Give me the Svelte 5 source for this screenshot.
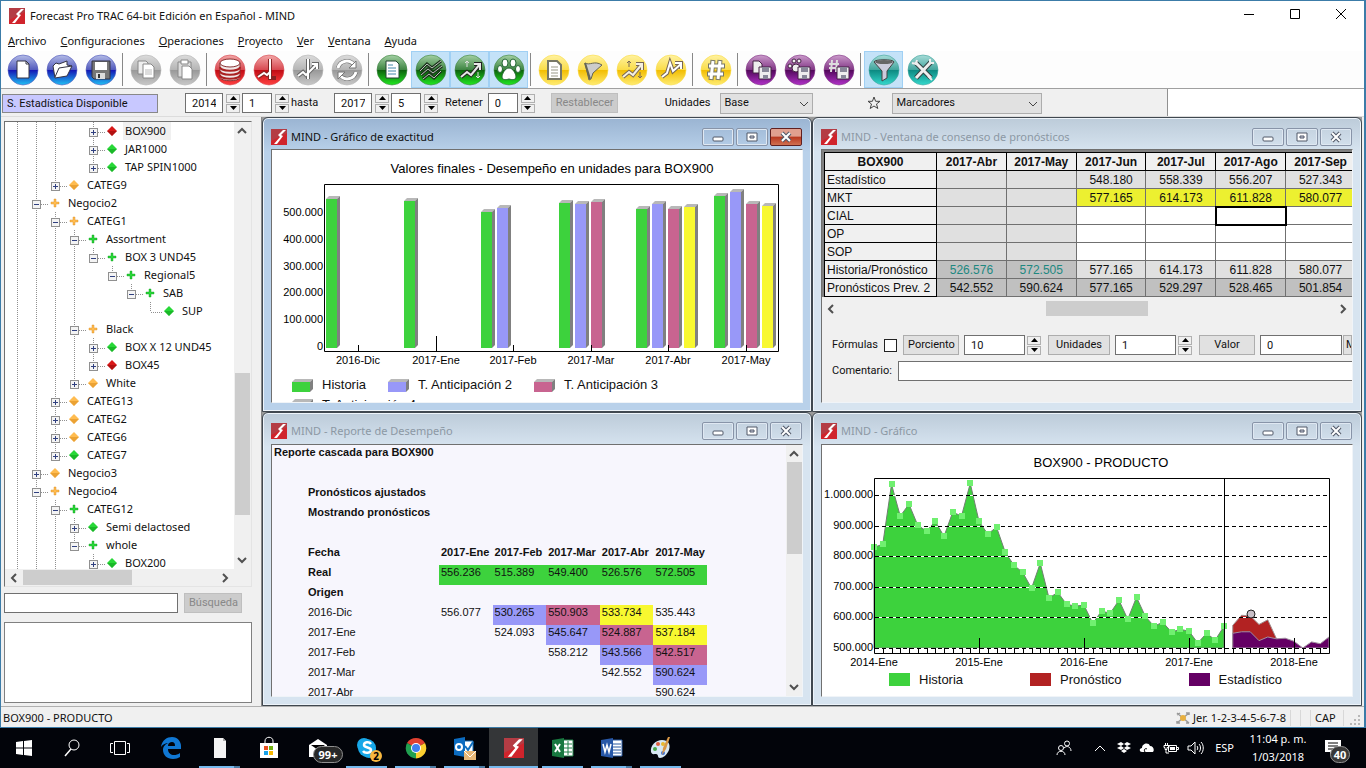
<script lang="ts">
  type TreeRow = { label: string; depth: number; box: '+' | '-' | ''; color: string; selected?: boolean };

  const menus = ['Archivo', 'Configuraciones', 'Operaciones', 'Proyecto', 'Ver', 'Ventana', 'Ayuda'];

  const tones: Record<string, string[]> = {
    blue: ['#b4bce6', '#5058bc', '#1414b4', '#20c0f4'],
    gray: ['#dcdcdc', '#b4b4b4', '#989898', '#c8c8c8'],
    red: ['#f2a8a8', '#d84850', '#c00c14', '#ff4040'],
    green: ['#a4d0a4', '#3c8440', '#0c600c', '#20e820'],
    yellow: ['#fff2a0', '#fadc48', '#f2bc00', '#ffec70'],
    purple: ['#cc9ccc', '#803484', '#500858', '#b030c8'],
    teal: ['#a8dcd8', '#40a49c', '#0c8880', '#34d8cc']
  };

  const trend = 'M7 23l6-5 4 3 9-11M20 10h6v6';
  const glyphs: Record<string, string> = {
    page: '<path d="M10 7h9l3 3v14H10z" fill="#fff" stroke="#334"/><path d="M19 7v3h3" fill="none" stroke="#334"/>',
    folder: '<path d="M7 12l3-3 3 1 8-3v4l5 1-5 10-12 2z" fill="#fff" stroke="#334"/><path d="M9 23l4-9 13-2" fill="none" stroke="#334"/>',
    floppy: '<path d="M7 7h18v18H9l-2-2z" fill="#777" stroke="#334"/><path d="M10 8h12v8H10z" fill="#fff"/><path d="M11 19h9v6h-9z" fill="#ddd"/><path d="M13 20h2v4h-2z" fill="#333"/>',
    copy: '<path d="M8 7h8l2 2v11H8z" fill="#eee" stroke="#888"/><path d="M13 10h8l3 3v11H13z" fill="#fff" stroke="#888"/><path d="M15 16h7M15 18h7M15 20h7" stroke="#bbb"/>',
    paste: '<path d="M9 8h13v15H9z" fill="#ddd" stroke="#888"/><path d="M12 6h7v4h-7z" fill="#fff" stroke="#888"/><path d="M13 12h7l3 3v10H13z" fill="#fff" stroke="#888"/>',
    db: '<path d="M6 9v14c0 5 20 5 20 0V9z" fill="#f0e8e8" stroke="#833"/><ellipse cx="16" cy="9" rx="10" ry="4" fill="#fff" stroke="#833"/><path d="M6 13c0 5 20 5 20 0M6 17c0 5 20 5 20 0M6 21c0 5 20 5 20 0" fill="none" stroke="#a22" stroke-width="2"/>',
    spike: '<path d="M17 5v20M5 23l6-4 3 2 3-3v6h6" fill="none" stroke="#822" stroke-width="4"/><path d="M17 5v20M5 23l6-4 3 2 3-3" fill="none" stroke="#fff" stroke-width="2"/>',
    spike2: '<path d="M16 5v20M6 22l5-4 3 3 11-11M20 10h5v5" fill="none" stroke="#666" stroke-width="4"/><path d="M16 5v20M6 22l5-4 3 3 11-11M20 10h5v5" fill="none" stroke="#fff" stroke-width="2"/>',
    refresh: '<path d="M7 14c2-8 12-9 16-3M25 18c-2 8-12 9-16 3" fill="none" stroke="#666" stroke-width="4"/><path d="M7 14c2-8 12-9 16-3M25 18c-2 8-12 9-16 3" fill="none" stroke="#fff" stroke-width="3"/><path d="M25 7v7h-7zM7 25v-7h7z" fill="#fff" stroke="#777"/>',
    report: '<path d="M10 7h10l3 3v14H10z" fill="#fff" stroke="#243"/><path d="M12 11h5M12 14h8M12 17h8M12 20h8" stroke="#48a"/>',
    waves: '<path d="M5 17l7-7 5 4 9-7M6 21l7-6 5 4 9-7M8 25l6-5 5 4 7-7" fill="none" stroke="#1c301c" stroke-width="3"/><path d="M5 17l7-7 5 4 9-7M6 21l7-6 5 4 9-7M8 25l6-5 5 4 7-7" fill="none" stroke="#b8c8b8" stroke-width="1"/>',
    trend: `<path d="${trend}" fill="none" stroke="#222" stroke-width="4"/><path d="${trend}" fill="none" stroke="#e8e8e8" stroke-width="2"/><path d="M13 13V7M11 9l2-2 2 2M24 18v6M22 22l2 2 2-2" fill="none" stroke="#ddd"/>`,
    trendY: `<path d="${trend}" fill="none" stroke="#765" stroke-width="4"/><path d="${trend}" fill="none" stroke="#f4f0e0" stroke-width="2"/><path d="M13 13V7M11 9l2-2 2 2M24 18v6M22 22l2 2 2-2" fill="none" stroke="#765"/>`,
    paw: '<g fill="#fff" stroke="#263"><path d="M16 14c4 0 7 6 7 9s-4 3-7 2c-3 1-7 1-7-2s3-9 7-9z"/><ellipse cx="12" cy="9" rx="3" ry="4"/><ellipse cx="20" cy="9" rx="3" ry="4"/><ellipse cx="7" cy="15" rx="2.500" ry="3.500"/><ellipse cx="25" cy="15" rx="2.500" ry="3.500"/></g>',
    note: '<path d="M10 7h9l4 4v14H10z" fill="#fff" stroke="#776" stroke-width="2"/><path d="M13 13h7M13 16h7M13 19h7M13 22h7" stroke="#998"/>',
    flag: '<path d="M8 9c5 3 9-3 17 2l-9 8-2 6-2 1z" fill="#ccc" stroke="#665"/><path d="M8 9l5 16" stroke="#665" stroke-width="2"/>',
    zigzag: '<path d="M7 23l5-4 3-10 3 8 8-7M20 9h6v6" fill="none" stroke="#765" stroke-width="4"/><path d="M7 23l5-4 3-10 3 8 8-7M20 9h6v6" fill="none" stroke="#fff" stroke-width="2"/>',
    hash: '<path d="M13 6l-2 20M20 6l-2 20M8 12h17M7 20h17" stroke="#776" stroke-width="5"/><path d="M13 7l-2 18M20 7l-2 18M9 12h15M8 20h15" stroke="#fff" stroke-width="3"/>',
    saveDoc: '<path d="M8 7h6l3 3v9H8z" fill="#eee" stroke="#424"/><path d="M14 13h12v12H14z" fill="#eee" stroke="#424"/><path d="M17 13h7v5h-7zM18 21h5v4h-5z" fill="#889"/>',
    savePaw: '<g fill="#eee" stroke="#424"><circle cx="12" cy="14" r="4"/><circle cx="6" cy="12" r="2"/><circle cx="10" cy="7" r="2"/><circle cx="15" cy="7" r="2"/><path d="M14 13h12v12H14z"/></g><path d="M17 13h7v5h-7zM18 21h5v4h-5z" fill="#889"/>',
    saveHash: '<path d="M9 6l-1 12M14 6l-1 12M6 10h10M6 14h10" stroke="#ddd" stroke-width="2"/><path d="M14 13h12v12H14z" fill="#eee" stroke="#424"/><path d="M17 13h7v5h-7zM18 21h5v4h-5z" fill="#889"/>',
    funnel: '<path d="M6 8c0-3 20-3 20 0l-7 9v7l-5 3V17z" fill="#ccd" stroke="#444"/><ellipse cx="16" cy="8" rx="9" ry="2" fill="#666"/>',
    tools: '<path d="M8 8l16 16M24 8L9 24" stroke="#344" stroke-width="5"/><path d="M8 8l16 16M24 8L9 24" stroke="#eee" stroke-width="3"/><path d="M5 9l4 1 1-4M23 5v4h4M21 22l4 4" fill="none" stroke="#eee" stroke-width="2"/>'
  };

  const tools = [
    ['blue', 'page', 'Nuevo'], ['blue', 'folder', 'Abrir'], ['blue', 'floppy', 'Guardar'], null,
    ['gray', 'copy', 'Copiar'], ['gray', 'paste', 'Pegar'], null,
    ['red', 'db', 'Datos'], ['red', 'spike', 'Historia'], ['gray', 'spike2', 'Pronosticar'], ['gray', 'refresh', 'Actualizar'], null,
    ['green', 'report', 'Reporte'], ['green', 'waves', 'Gráfico', 'on'], ['green', 'trend', 'Consenso', 'on'], ['green', 'paw', 'Desempeño', 'on'], null,
    ['yellow', 'note', 'Notas'], ['yellow', 'flag', 'Excepciones'], ['yellow', 'trendY', 'Tendencia'], ['yellow', 'zigzag', 'Eventos'], null,
    ['yellow', 'hash', 'Números'], null,
    ['purple', 'saveDoc', 'Exportar reporte'], ['purple', 'savePaw', 'Exportar desempeño'], ['purple', 'saveHash', 'Exportar números'], null,
    ['teal', 'funnel', 'Filtro', 'on'], ['teal', 'tools', 'Opciones']
  ];

  const tree: TreeRow[] = [
    { label: 'BOX900', depth: 4, box: '+', color: 'red', selected: true },
    { label: 'JAR1000', depth: 4, box: '+', color: 'green' },
    { label: 'TAP SPIN1000', depth: 4, box: '+', color: 'green' },
    { label: 'CATEG9', depth: 2, box: '+', color: 'orange' },
    { label: 'Negocio2', depth: 1, box: '-', color: 'orange' },
    { label: 'CATEG1', depth: 2, box: '-', color: 'orange' },
    { label: 'Assortment', depth: 3, box: '-', color: 'green' },
    { label: 'BOX 3 UND45', depth: 4, box: '-', color: 'green' },
    { label: 'Regional5', depth: 5, box: '-', color: 'green' },
    { label: 'SAB', depth: 6, box: '-', color: 'green' },
    { label: 'SUP', depth: 7, box: '', color: 'green' },
    { label: 'Black', depth: 3, box: '-', color: 'orange' },
    { label: 'BOX X 12 UND45', depth: 4, box: '+', color: 'green' },
    { label: 'BOX45', depth: 4, box: '+', color: 'red' },
    { label: 'White', depth: 3, box: '+', color: 'orange' },
    { label: 'CATEG13', depth: 2, box: '+', color: 'orange' },
    { label: 'CATEG2', depth: 2, box: '+', color: 'orange' },
    { label: 'CATEG6', depth: 2, box: '+', color: 'orange' },
    { label: 'CATEG7', depth: 2, box: '+', color: 'green' },
    { label: 'Negocio3', depth: 1, box: '+', color: 'orange' },
    { label: 'Negocio4', depth: 1, box: '-', color: 'orange' },
    { label: 'CATEG12', depth: 2, box: '-', color: 'green' },
    { label: 'Semi delactosed', depth: 3, box: '+', color: 'green' },
    { label: 'whole', depth: 3, box: '-', color: 'green' },
    { label: 'BOX200', depth: 4, box: '+', color: 'green' }
  ];
  const dotColor: Record<string, string[]> = {
    red: ['#d81818', '#8c0808'], green: ['#28d838', '#0c9818'], orange: ['#ffbc50', '#d88818']
  };

  // a guide goes on below row i when a later row sits in the same column
  function continues(i: number, col: number) {
    const next = tree.slice(i + 1).find((r) => r.depth <= col);
    return next ? next.depth === col : col <= 2;
  }

  const barColors = ['#3dd23d', '#9898f8', '#c86490', '#f8f830'];
  const groups = [
    { name: '2016-Dic', values: [556] },
    { name: '2017-Ene', values: [548] },
    { name: '2017-Feb', values: [507, 524] },
    { name: '2017-Mar', values: [541, 536, 545] },
    { name: '2017-Abr', values: [519, 536, 519, 526] },
    { name: '2017-May', values: [567, 582, 536, 530] }
  ];
  const barLegend = ['Historia', 'T. Anticipación 2', 'T. Anticipación 3', 'T. Anticipación 4'];
  const barX = (g: number, b: number) => Math.round(54 + g * 77.6) + b * 16;
  const barY = (v: number) => Math.round(198 - v * 0.268);

  const months = ['2017-Abr', '2017-May', '2017-Jun', '2017-Jul', '2017-Ago', '2017-Sep'];
  const consensus = [
    { name: 'Estadístico', kind: 'calc', cells: ['', '', '548.180', '558.339', '556.207', '527.343'] },
    { name: 'MKT', kind: 'mkt', cells: ['', '', '577.165', '614.173', '611.828', '580.077'] },
    { name: 'CIAL', kind: 'edit', cells: ['', '', '', '', '', ''] },
    { name: 'OP', kind: 'edit', cells: ['', '', '', '', '', ''] },
    { name: 'SOP', kind: 'edit', cells: ['', '', '', '', '', ''] },
    { name: 'Historia/Pronóstico', kind: 'hist', cells: ['526.576', '572.505', '577.165', '614.173', '611.828', '580.077'] },
    { name: 'Pronósticos Prev. 2', kind: 'prev', cells: ['542.552', '590.624', '577.165', '529.297', '528.465', '501.854'] }
  ];

  const reportMonths = ['2017-Ene', '2017-Feb', '2017-Mar', '2017-Abr', '2017-May'];
  const real = ['556.236', '515.389', '549.400', '526.576', '572.505'];
  const waterfall = [
    { origin: '2016-Dic', cells: ['556.077', '530.265', '550.903', '533.734', '535.443'] },
    { origin: '2017-Ene', cells: ['', '524.093', '545.647', '524.887', '537.184'] },
    { origin: '2017-Feb', cells: ['', '', '558.212', '543.566', '542.517'] },
    { origin: '2017-Mar', cells: ['', '', '', '542.552', '590.624'] },
    { origin: '2017-Abr', cells: ['', '', '', '', '590.624'] }
  ];

  const history = [
    829, 839, 1035, 931, 970, 901, 882, 914, 865, 944, 931, 1038, 914, 872, 895, 813, 770, 747, 695, 777,
    663, 682, 643, 637, 640, 581, 620, 614, 656, 594, 666, 604, 571, 584, 552, 561, 555, 516, 548, 526, 571
  ];
  const px = (i: number) => 52 + i * 8.75;
  const py = (v: number) => 203 - (v - 500) * 0.306;
  const line = (vals: number[], from = 0) => vals.map((v, i) => `${px(from + i)},${py(v)}`).join(' ');
  const forecast = [574, 607, 605, 577, 592, 530];
  const statistic = [548, 553, 553, 524, 536, 530, 532, 522, 500, 520, 514, 536];
  const lineLegend = [['Historia', '#3dd23d'], ['Pronóstico', '#b22222'], ['Estadístico', '#640064']];
</script>

{#snippet logo(size: number)}
  <svg width={size} height={size} viewBox="0 0 16 16" aria-hidden="true">
    <path d="M0 0h16v16H0z" fill="#d0242c" />
    <path d="M0 0h16v4L0 12z" fill="#b43c44" />
    <path d="M12 1L7 6l2 2-6 7h3l6-8-2-1 5-5z" fill="#fff" />
  </svg>
{/snippet}

{#snippet chevron(dir: string)}
  <svg class="chev {dir}" width="10" height="10" viewBox="0 0 10 10" aria-hidden="true">
    <path d="M1 7l4-4 4 4" fill="none" stroke="#505050" stroke-width="2" />
  </svg>
{/snippet}

{#snippet spinner()}
  <span class="spinner">
    <button aria-label="Subir"><svg width="7" height="4" viewBox="0 0 7 4"><path d="M0 4l3.5-4L7 4z" /></svg></button>
    <button aria-label="Bajar"><svg width="7" height="4" viewBox="0 0 7 4"><path d="M0 0l3.5 4L7 0z" /></svg></button>
  </span>
{/snippet}

{#snippet titlebar(title: string)}
  <header class="mdi-title">
    {@render logo(16)}
    <h2>{title}</h2>
    <button aria-label="Minimizar"><svg width="12" height="12" viewBox="0 0 12 12"><rect x="1" y="6" width="10" height="4" rx="1" fill="#fff" stroke="#505868" /></svg></button>
    <button aria-label="Restaurar"><svg width="12" height="12" viewBox="0 0 12 12"><path d="M1 2h10v8H1z" fill="#fff" stroke="#505868" /><path d="M4 5h4v2H4z" fill="#ccd" stroke="#505868" /></svg></button>
    <button class="close" aria-label="Cerrar"><svg width="12" height="12" viewBox="0 0 12 12"><path d="M2 2l8 8M10 2l-8 8" stroke="#505868" stroke-width="4" /><path d="M2 2l8 8M10 2l-8 8" stroke="#fff" stroke-width="2" /></svg></button>
  </header>
{/snippet}

<div class="desktop">
  <div class="app">
    <header class="title">
      {@render logo(16)}
      <h1>Forecast Pro TRAC 64-bit Edición en Español - MIND</h1>
      <button aria-label="Minimizar"><svg width="12" height="12" viewBox="0 0 12 12"><path d="M1 6.5h10" stroke="#000" /></svg></button>
      <button aria-label="Maximizar"><svg width="12" height="12" viewBox="0 0 12 12"><path d="M1.5 1.5h9v9h-9z" fill="none" stroke="#000" /></svg></button>
      <button aria-label="Cerrar"><svg width="12" height="12" viewBox="0 0 12 12"><path d="M1 1l10 10M11 1L1 11" stroke="#000" /></svg></button>
    </header>

    <nav class="menu">
      {#each menus as m}
        <button><u>{m[0]}</u>{m.slice(1)}</button>
      {/each}
    </nav>

    <div class="toolbar">
      <svg class="defs" width="0" height="0" aria-hidden="true">
        <defs>
          {#each Object.entries(tones) as [name, c]}
            <linearGradient id="tone-{name}" x1="0" y1="0" x2="0" y2="1">
              <stop offset="0" stop-color={c[0]} />
              <stop offset="0.5" stop-color={c[1]} />
              <stop offset="0.5" stop-color={c[2]} />
              <stop offset="1" stop-color={c[3]} />
            </linearGradient>
          {/each}
        </defs>
      </svg>
      {#each tools as t}
        {#if t}
          <button class="tool" class:on={t[3]} aria-label={t[2]}>
            <svg width="32" height="32" viewBox="0 0 32 32">
              <circle cx="16" cy="16" r="15" fill="url(#tone-{t[0]})" stroke={tones[t[0]][1]} stroke-opacity="0.6" />
              {@html glyphs[t[1]]}
            </svg>
          </button>
        {:else}
          <span class="sep"></span>
        {/if}
      {/each}
    </div>

    <div class="params-row">
      <div class="params">
        <output class="state">S. Estadística Disponible</output>
        <input class="year" value="2014" aria-label="Año inicial" />{@render spinner()}
        <input class="num" value="1" aria-label="Periodo inicial" />{@render spinner()}
        <label for="to-year">hasta</label>
        <input id="to-year" class="year" value="2017" />{@render spinner()}
        <input class="num" value="5" aria-label="Periodo final" />{@render spinner()}
        <label for="hold">Retener</label>
        <input id="hold" class="num" value="0" />{@render spinner()}
        <button class="btn off reset" disabled>Restablecer</button>
        <label for="units">Unidades</label>
        <span class="combo units">
          <select id="units"><option>Base</option></select>
          <svg width="10" height="6" viewBox="0 0 10 6"><path d="M1 1l4 4 4-4" fill="none" stroke="#444" /></svg>
        </span>
        <svg class="star" width="14" height="14" viewBox="0 0 14 14" aria-hidden="true"><path d="M7 1l1.6 4.300H13L9.500 8l1.300 4.500L7 10l-3.800 2.500L4.500 8 1 5.300h4.400z" fill="none" stroke="#444" /></svg>
        <span class="combo marks">
          <select aria-label="Marcadores"><option>Marcadores</option></select>
          <svg width="10" height="6" viewBox="0 0 10 6"><path d="M1 1l4 4 4-4" fill="none" stroke="#444" /></svg>
        </span>
      </div>
    </div>

    <main>
      <aside>
        <div class="tree">
          <ul>
            {#each tree as row, i}
              {@const x = row.depth * 19 + 12}
              <li>
                <svg width={x + 30} height="18" aria-hidden="true">
                  <g stroke="#909090" stroke-dasharray="1 1">
                    {#each Array(row.depth) as _, c}
                      {#if continues(i, c)}<path d="M{c * 19 + 12.5} 0v18" />{/if}
                    {/each}
                    <path d="M{x + 0.5} 0v10M{x + 1} 10.500h11" />
                    {#if continues(i, row.depth)}<path d="M{x + 0.5} 10v8" />{/if}
                  </g>
                  {#if row.box}
                    <rect x={x - 4 + 0.5} y="6.5" width="8" height="8" fill="#f4f4f4" stroke="#909090" />
                    <path d="M{x - 2} 10.500h5" stroke="#304080" />
                    {#if row.box === '+'}<path d="M{x + 0.5} 8v5" stroke="#304080" />{/if}
                  {/if}
                  {#if row.box === '-'}
                    <path d="M{x + 18} 5h2v3h3v2h-3v3h-2v-3h-3v-2h3z" fill={dotColor[row.color][0]} stroke={dotColor[row.color][1]} stroke-opacity="0.4" />
                  {:else}
                    <path d="M{x + 19} 4l5 5-5 5-5-5z" fill={dotColor[row.color][0]} />
                    <path d="M{x + 19} 14l-5-5h10z" fill={dotColor[row.color][1]} fill-opacity="0.5" />
                  {/if}
                </svg>
                <button class:selected={row.selected}>{row.label}</button>
              </li>
            {/each}
          </ul>
          <div class="vbar">
            {@render chevron('up')}
            <span class="space"></span><span class="thumb"></span><span class="after"></span>
            {@render chevron('down')}
          </div>
          <div class="hbar">
            {@render chevron('left')}
            <span class="thumb"></span><span class="after"></span>
            {@render chevron('right')}
          </div>
        </div>
        <div class="search">
          <input aria-label="Buscar" />
          <button class="btn off" disabled>Búsqueda</button>
        </div>
        <div class="results"></div>
      </aside>

      <div class="mdi">
        <section class="win active">
          {@render titlebar('MIND - Gráfico de exactitud')}
          <div class="client chart">
            <svg class="plot" viewBox="0 0 530 220" role="img" aria-label="Desempeño en unidades">
              <text class="caption" x="280" y="23">Valores finales - Desempeño en unidades para BOX900</text>
              <path d="M52.500 34.500h454v167h-454z" fill="none" stroke="#000" />
              {#each [0, 1, 2, 3, 4, 5] as k}
                <text class="end" x="51" y={Math.round(200 - k * 26.8)}>{k ? `${k}00.000` : '0'}</text>
              {/each}
              {#each groups as g, gi}
                {#each g.values as v, b}
                  {@const x = barX(gi, b)}
                  {@const y = barY(v)}
                  <rect {x} {y} width="11" height={198 - y} fill={barColors[b]} />
                  <path d="M{x} {y}l3-3h11l-3 3z" fill="#b8b8b8" />
                  <path d="M{x + 11} {y}l3-3V195l-3 3z" fill="#808080" />
                {/each}
                <path d="M{Math.round(86 + gi * 77.6) + 0.5} 201v-{gi === 1 ? 15 : 6}" stroke="#000" />
                <text class="mid" x={Math.round(86 + gi * 77.6)} y="214">{g.name}</text>
              {/each}
            </svg>
            <div class="legend bars">
              {#each barLegend as name, i}
                <span>
                  <svg width="21" height="13" viewBox="0 0 21 13">
                    <path d="M0 3h18v10H0z" fill={barColors[i]} /><path d="M0 3l3-3h18l-3 3z" fill="#b8b8b8" /><path d="M18 3l3-3v10l-3 3z" fill="#808080" />
                  </svg>
                  {name}
                </span>
              {/each}
            </div>
          </div>
        </section>

        <section class="win">
          {@render titlebar('MIND - Ventana de consenso de pronósticos')}
          <div class="client form">
            <div class="sheet">
              <table>
                <thead>
                  <tr>
                    <th class="name">BOX900</th>
                    {#each months as m}<th>{m}</th>{/each}
                  </tr>
                </thead>
                <tbody>
                  {#each consensus as row}
                    <tr class={row.kind}>
                      <th scope="row">{row.name}</th>
                      {#each row.cells as c, i}
                        <td class:past={i < 2} class:cursor={row.name === 'CIAL' && i === 4}>{c}</td>
                      {/each}
                    </tr>
                  {/each}
                </tbody>
              </table>
            </div>
            <div class="hbar wide">
              {@render chevron('left')}
              <span class="space"></span><span class="thumb"></span><span class="after"></span>
              {@render chevron('right')}
            </div>
            <div class="adjust">
              <label for="formulas">Fórmulas</label>
              <input id="formulas" type="checkbox" />
              <button class="btn">Porciento</button>
              <input class="amount" value="10" aria-label="Porciento" />{@render spinner()}
              <button class="btn units-btn">Unidades</button>
              <input class="amount" value="1" aria-label="Unidades" />{@render spinner()}
              <button class="btn">Valor</button>
              <input class="amount value" value="0" aria-label="Valor" />
              <button class="btn more">M</button>
            </div>
            <div class="comment">
              <label for="comment">Comentario:</label>
              <input id="comment" />
            </div>
          </div>
        </section>

        <section class="win">
          {@render titlebar('MIND - Reporte de Desempeño')}
          <div class="client report">
            <div class="paper">
              <h3>Reporte cascada para BOX900</h3>
              <h4>Pronósticos ajustados</h4>
              <h4>Mostrando pronósticos</h4>
              <table>
                <thead>
                  <tr><th class="origin">Fecha</th>{#each reportMonths as m}<th>{m}</th>{/each}</tr>
                </thead>
                <tbody>
                  <tr><th>Real</th>{#each real as v}<td class="lag0">{v}</td>{/each}</tr>
                  <tr><th>Origen</th></tr>
                  {#each waterfall as row, r}
                    <tr>
                      <td>{row.origin}</td>
                      {#each row.cells as v, c}
                        <td class={c - r > 0 && c - r < 4 ? `lag${c - r}` : ''}>{v}</td>
                      {/each}
                    </tr>
                  {/each}
                </tbody>
              </table>
            </div>
            <div class="vbar">
              {@render chevron('up')}
              <span class="thumb"></span><span class="after"></span>
              {@render chevron('down')}
            </div>
          </div>
        </section>

        <section class="win">
          {@render titlebar('MIND - Gráfico')}
          <div class="client chart">
            <svg class="plot" viewBox="0 0 530 225" role="img" aria-label="Historia y pronóstico">
              <text class="caption" x="279" y="22">BOX900 - PRODUCTO</text>
              <polygon points="{px(0)},203 {line(history)} {px(40)},203" fill="#3dd23d" stroke="#708070" />
              <polygon points="{px(41)},203 {line(forecast, 41)} {px(46)},203" fill="#b22222" stroke="#a09090" />
              <polygon points="{px(41)},203 {line(statistic, 41)} {px(52)},203" fill="#640064" stroke="#a090a0" />
              {#each [5, 6, 7, 8, 9, 10] as k}
                {@const y = Math.round(203 - (k - 5) * 30.6) + 0.5}
                <path d="M53 {y}h455" stroke="#fff" />
                <path d="M53 {y}h455" stroke="#000" stroke-dasharray="4 3" />
                <text class="end" x="51" y={y + 2.5}>{k === 10 ? '1.000.000' : `${k}00.000`}</text>
              {/each}
              {#each history as v, i}
                <rect x={Math.round(px(i)) - 3} y={Math.round(py(v)) - 3} width="6" height="6" fill="#70f070" />
              {/each}
              <path d="M52.500 33.500h455v175h-455z" fill="none" stroke="#000" />
              <path d="M402.500 34v174" stroke="#000" />
              {#each Array(53) as _, i}
                <path d="M{Math.round(px(i)) + 0.5} 208v-{i % 12 ? 5 : 15}" stroke="#000" />
              {/each}
              <circle cx="429" cy="169" r="4" fill="#c8c0c8" stroke="#222" />
              {#each [2014, 2015, 2016, 2017, 2018] as y, i}
                <text class="mid" x={52 + i * 105} y="221">{y}-Ene</text>
              {/each}
            </svg>
            <div class="legend lines">
              {#each lineLegend as [name, color]}
                <span><i style:background={color}></i>{name}</span>
              {/each}
            </div>
          </div>
        </section>
      </div>
    </main>

    <footer class="status">
      <span class="path">BOX900 - PRODUCTO</span>
      <svg width="14" height="12" viewBox="0 0 14 12" aria-hidden="true">
        <path d="M1 1l12 10M13 1L1 11M1 3l3-2M10 1h3v2M1 9v2h3M10 11h3" stroke="#999" stroke-width="1.500" fill="none" /><circle cx="7" cy="6" r="3" fill="#e8b040" />
      </svg>
      <span class="jer">Jer. 1-2-3-4-5-6-7-8</span>
      <span class="cell"></span>
      <span class="cell"></span>
      <span class="cell cap">CAP</span>
      <svg class="grip" width="12" height="12" viewBox="0 0 12 12" aria-hidden="true"><path d="M8 0h2v2H8zM4 4h2v2H4zM8 4h2v2H8zM0 8h2v2H0zM4 8h2v2H4zM8 8h2v2H8z" fill="#b8b8b8" /></svg>
    </footer>
  </div>

  <nav class="taskbar">
    <button class="sys" aria-label="Inicio"><svg width="16" height="16" viewBox="0 0 16 16"><path d="M0 2l7-1v6.500H0zM8 1l8-1v7.500H8zM0 8.500h7V15l-7-1zM8 8.500h8V16l-8-1z" fill="#fff" /></svg></button>
    <button class="sys" aria-label="Buscar"><svg width="18" height="18" viewBox="0 0 18 18"><circle cx="11" cy="6" r="5" fill="none" stroke="#fff" /><path d="M8 10l-6 7" stroke="#fff" stroke-width="1.500" /></svg></button>
    <button class="sys" aria-label="Vista de tareas"><svg width="20" height="16" viewBox="0 0 20 16"><path d="M4.500 1.500h11v13h-11zM3 3.500H.5v9H3M17 3.500h2.500v9H17" fill="none" stroke="#fff" /></svg></button>
    <button aria-label="Edge"><svg width="22" height="22" viewBox="0 0 22 22"><path d="M1 10C2 3 7 0 12 0c6 0 9 5 9 9v3H8c0 4 3 6 6 6 2 0 4-.5 6-2v4c-2 1-4 2-7 2-6 0-10-4-10-9 0-4 3-6 5-7-2 0-5 1-7 4zM8 9h7c0-3-1-4-3-4S8 6 8 9z" fill="#1078d4" /></svg></button>
    <button class="open two" aria-label="Documento"><svg width="16" height="22" viewBox="0 0 16 22"><path d="M2 1h9l3 3v17H2z" fill="#f4f4f4" /><path d="M11 1v3h3z" fill="#aaa" /></svg></button>
    <button aria-label="Tienda"><svg width="20" height="24" viewBox="0 0 20 24"><path d="M6 8V5c0-5 8-5 8 0v3" fill="none" stroke="#fff" /><path d="M1 7h18v15H1z" fill="#fff" /><path d="M5 10h4v4H5z" fill="#e85020" /><path d="M10 10h4v4h-4z" fill="#70b010" /><path d="M5 15h4v4H5z" fill="#18a0e8" /><path d="M10 15h4v4h-4z" fill="#f8b800" /></svg></button>
    <button aria-label="Correo"><svg width="20" height="20" viewBox="0 0 20 20"><path d="M1 7l9-6 9 6v12H1z" fill="#fff" /><path d="M3 7h14l-7 5z" fill="#000" /></svg><b class="badge mail">99+</b></button>
    <button class="open" aria-label="Skype"><svg width="24" height="24" viewBox="0 0 24 24"><circle cx="9" cy="9" r="7" fill="#18a8e8" /><circle cx="14" cy="15" r="7" fill="#18a8e8" /><circle cx="12" cy="12" r="9" fill="#18a8e8" /><path d="M16 8c-2-3-7-2-7 1s7 2 7 5-6 4-8 1" fill="none" stroke="#fff" stroke-width="2.500" /></svg><b class="badge skype">2</b></button>
    <button class="open two" aria-label="Chrome"><svg width="22" height="22" viewBox="0 0 22 22"><path d="M11 11L2 6a10.500 10.500 0 0 1 18 0z" fill="#e04030" /><path d="M11 11v10.500A10.500 10.500 0 0 1 2 6z" fill="#20a050" /><path d="M11 11l9-5a10.500 10.500 0 0 1-9 15.500z" fill="#fcd030" /><circle cx="11" cy="11" r="5" fill="#fff" /><circle cx="11" cy="11" r="4" fill="#4080f0" /></svg></button>
    <button class="open two" aria-label="Outlook"><svg width="24" height="24" viewBox="0 0 24 24"><path d="M10 5h10v12H10z" fill="#fff" stroke="#1070c0" /><path d="M12 10l3 4 5-8" fill="none" stroke="#1070c0" stroke-width="2" /><path d="M1 3l11-2v20L1 19z" fill="#0c6cc0" /><circle cx="6" cy="11" r="3" fill="none" stroke="#fff" stroke-width="2" /><path d="M11 15h12v9H11z" fill="#e8b878" /><path d="M11 15l6 6 6-6" fill="none" stroke="#fff" /></svg></button>
    <button class="open current" aria-label="Forecast Pro">{@render logo(20)}</button>
    <button class="open" aria-label="Excel"><svg width="22" height="22" viewBox="0 0 22 22"><path d="M11 3h10v16H11z" fill="#fff" stroke="#208048" /><path d="M12 7h8M12 11h8M12 15h8M16 4v14" stroke="#208048" /><path d="M0 3l12-2v20L0 19z" fill="#187840" /><path d="M3 7l5 8M8 7l-5 8" stroke="#fff" stroke-width="2" /></svg></button>
    <button class="open two" aria-label="Word"><svg width="22" height="22" viewBox="0 0 22 22"><path d="M11 3h10v16H11z" fill="#fff" stroke="#2858a0" /><path d="M12 7h8M12 10h8M12 13h8M12 16h8" stroke="#2858a0" /><path d="M0 3l12-2v20L0 19z" fill="#2858a8" /><path d="M2 7l2 8 2-7 2 7 2-8" fill="none" stroke="#fff" stroke-width="1.500" /></svg></button>
    <button class="open" aria-label="Paint"><svg width="24" height="24" viewBox="0 0 24 24"><path d="M2 16C1 9 7 4 13 4c6 0 9 4 7 10-2 5-6 8-9 8-3 0-1-4-4-4-2 0-4 1-5-2z" fill="#d8e8f4" /><circle cx="6" cy="13" r="2" fill="#48a848" /><circle cx="9" cy="8" r="2" fill="#e06040" /><circle cx="14" cy="8" r="2" fill="#e8b830" /><circle cx="14" cy="17" r="2" fill="#4070d0" /><path d="M21 1l-4 12-4 6 1-7 5-11z" fill="#d89848" /></svg></button>

    <div class="tray">
      <svg width="16" height="16" viewBox="0 0 16 16"><g fill="none" stroke="#fff"><circle cx="5" cy="8" r="2.500" /><path d="M1 15c0-5 8-5 8 0" /><circle cx="11" cy="3.500" r="2.500" /><path d="M8 8c3-3 7-1 7 3" /></g></svg>
      <svg class="more-icons" width="12" height="8" viewBox="0 0 12 8"><path d="M1 7l5-5 5 5" fill="none" stroke="#fff" /></svg>
      <svg width="14" height="12" viewBox="0 0 14 12"><path d="M4 0l3 2-3 2-4-2zM10 0l4 2-4 2-3-2zM4 4l3 2-3 2-4-2zM10 4l4 2-4 2-3-2zM7 7l3 2-3 2-3-2z" fill="#fff" /></svg>
      <svg width="16" height="10" viewBox="0 0 16 10"><path d="M3 9C0 9 0 5 3 5c0-5 7-6 8-2 4 0 5 6 2 6z" fill="#fff" /><path d="M6 9c-2-3 1-4 2-3" fill="none" stroke="#000" /></svg>
      <svg width="16" height="12" viewBox="0 0 16 12"><path d="M5.500 3.500h8v6h-8zM14 5.500h1.500v2H14M1 3.500h5v2H4v2H2v-2H1zM2.500 3V1M4.500 3V1M3 8v3h3" fill="none" stroke="#fff" /><path d="M7 5h5v3H7z" fill="#fff" /></svg>
      <svg width="18" height="14" viewBox="0 0 18 14"><path d="M1 5h3l4-4v12L4 9H1zM10 5c1 1 1 3 0 4M12 3c2 2 2 6 0 8M14 1c3 3 3 9 0 12" fill="none" stroke="#fff" /></svg>
      <span class="lang">ESP</span>
      <time datetime="2018-03-01T23:04">11:04 p. m.<br />1/03/2018</time>
      <button aria-label="Notificaciones"><svg width="16" height="16" viewBox="0 0 16 16"><path d="M0 0h16v12h-8l-3 3v-3H0z" fill="#fff" /><path d="M3 3h10M3 6h10M3 9h7" stroke="#000" /></svg><b class="badge note">40</b></button>
    </div>
  </nav>
</div>

<style>
  :global(body) { margin: 0; }
  .desktop {
    height: 100vh; display: flex; flex-direction: column; overflow: hidden;
    font: 11px/16px 'Noto Sans', 'Segoe UI', sans-serif; color: #111; background: #000;
  }
  .desktop :global(*) { box-sizing: border-box; }
  button, input, select { font: inherit; color: inherit; }
  button { border: none; background: none; padding: 0; }
  h1, h2, h3, h4, ul { margin: 0; padding: 0; font-size: inherit; font-weight: normal; }
  svg { flex-shrink: 0; }

  .app {
    flex: 1; min-height: 0; display: flex; flex-direction: column;
    background: #f0f0f0; border: 1px solid #3c7ca8; border-right-width: 2px;
  }
  .title { display: flex; align-items: center; height: 30px; padding-left: 8px; background: #fff; }
  .title h1 { flex: 1; padding-left: 5px; }
  .title button { width: 46px; height: 30px; }
  .menu { display: flex; gap: 14px; height: 20px; padding: 0 7px; background: #fff; }

  .toolbar { display: flex; align-items: center; height: 38px; padding-left: 2px; background: #fdfdfd; border-bottom: 1px solid #a0a0a0; }
  .defs { position: absolute; }
  .tool { width: 39px; height: 37px; display: flex; align-items: center; justify-content: center; }
  .tool.on { background: #c4e2f8; box-shadow: inset 0 0 0 1px #a0d0f4; }
  .sep { width: 1px; height: 33px; margin: 0 3px 0 2px; background: #888; }

  .params-row { display: flex; height: 28px; background: #fff; border-bottom: 1px solid #dcdcdc; }
  .params {
    display: flex; align-items: center; padding: 1px 125px 0 1px; background: #f0f0f0;
    border-right: 1px solid #909090; font-family: Roboto, 'Open Sans', sans-serif;
  }
  .state { width: 156px; height: 19px; margin-right: 27px; padding: 0 4px; background: #c8c8ff; border: 1px solid #888; line-height: 17px; }
  input { height: 20px; border: 1px solid #707070; background: #fff; padding: 0 6px; border-radius: 0; min-width: 0; }
  .year { width: 38px; }
  .num { width: 30px; }
  .spinner { display: flex; flex-direction: column; gap: 1px; margin: 0 2px 0 3px; }
  .spinner button {
    width: 14px; height: 9px; display: flex; align-items: center; justify-content: center;
    border: 1px solid #b0b0b0; background: #f0f0f0;
  }
  .params label { margin-right: 5px; }
  .params label[for='to-year'] { width: 38px; }
  .params label[for='hold'] { margin-left: 5px; }
  .btn { height: 20px; padding: 0 4px; background: #e1e1e1; border: 1px solid #adadad; white-space: nowrap; }
  .btn.off { background: #ccc; border-color: #bfbfbf; color: #888; }
  .reset { width: 67px; margin: 0 47px 0 14px; }
  .combo { position: relative; display: flex; }
  .combo select { appearance: none; width: 100%; height: 21px; padding: 0 3px; border: 1px solid #adadad; border-radius: 0; background: #e1e1e1; }
  .combo svg { position: absolute; right: 4px; top: 8px; pointer-events: none; }
  .units { width: 93px; margin-left: 5px; }
  .star { margin: 0 11px 0 54px; }
  .marks { width: 150px; }

  main { flex: 1; min-height: 0; display: flex; padding-right: 2px; }
  aside { width: 261px; flex-shrink: 0; display: flex; flex-direction: column; padding: 4px 9px 3px 3px; border-right: 1px solid #888; }
  .tree {
    flex: 1; min-height: 0; display: grid; grid-template: 1fr 17px / 1fr 17px; overflow: hidden;
    background: #f0f0f0; border: 1px solid #e4e4e4; border-top: 1px solid #707070; border-left: 1px solid #707070;
  }
  .tree ul { list-style: none; overflow: hidden; background: #fff; min-height: 0; }
  .tree li { display: flex; height: 18px; white-space: nowrap; }
  .tree li button { padding: 0 5px 0 2px; height: 18px; }
  .tree li button.selected { background: #f0f0f0; }
  .hbar, .vbar { display: flex; align-items: center; background: #f0f0f0; }
  .vbar { flex-direction: column; padding: 4px 0; width: 16px; }
  .hbar { height: 17px; padding: 0 4px; }
  .down { transform: rotate(180deg); }
  .left { transform: rotate(-90deg); }
  .right { transform: rotate(90deg); }
  .thumb { background: #cdcdcd; }
  .hbar .thumb { height: 15px; }
  .vbar .thumb { width: 15px; }
  .tree .vbar .space { flex: 236; }
  .tree .vbar .thumb { flex: 142; }
  .tree .vbar .after { flex: 40; }
  .tree .hbar .thumb { flex: 108; margin-left: 4px; }
  .tree .hbar .after { flex: 88; }
  .hbar.wide { margin-top: 3px; flex-shrink: 0; }
  .wide .space { flex: 208; }
  .wide .thumb { flex: 102; }
  .wide .after { flex: 188; }

  .search { display: flex; gap: 6px; padding: 6px 10px 9px 0; }
  .search input { flex: 1; }
  .search .btn { width: 58px; font-family: Roboto, 'Open Sans', sans-serif; }
  .results { height: 81px; background: #fff; border: 1px solid #808080; }

  .mdi {
    flex: 1; min-width: 0; display: grid; grid-template-columns: 1fr 1fr; grid-template-rows: 1fr 1fr;
    background: #9a9a9a;
  }
  .win {
    min-width: 0; min-height: 0; display: flex; flex-direction: column; padding: 0 8px 8px 8px; overflow: hidden;
    border: 1px solid #404850; border-radius: 6px 6px 0 0; background: linear-gradient(#bccbd9, #d7e4f0 34px);
    box-shadow: inset 0 0 0 1px #eef4fa;
  }
  .win.active { background: linear-gradient(#9ab4d2, #b9d1ea 34px); }
  .mdi-title { display: flex; align-items: center; height: 31px; padding: 6px 1px 0 0; gap: 2px; flex-shrink: 0; }
  .mdi-title h2 { flex: 1; padding-left: 2px; color: #8c98a4; }
  .active .mdi-title h2 { color: #111; }
  .mdi-title button {
    width: 32px; height: 18px; display: flex; align-items: center; justify-content: center;
    border: 1px solid #8894a8; border-radius: 2px; box-shadow: inset 0 0 0 1px #dfe8f2;
  }
  .active .close { background: linear-gradient(#e0a090 45%, #b83820 50%, #d07050); border-color: #602020; box-shadow: none; }
  .client {
    flex: 1; min-height: 0; display: flex; flex-direction: column; overflow: hidden; background: #fff;
    border: 1px solid #f0f4f8; border-top-color: #707070; border-left-color: #707070;
  }
  .chart { font-family: 'Liberation Sans', Arial, sans-serif; }
  .plot { width: 100%; height: auto; font-size: 11px; }
  .caption { font-size: 13px; text-anchor: middle; }
  .end { text-anchor: end; }
  .mid { text-anchor: middle; }
  .legend { display: flex; flex-wrap: wrap; font-size: 13px; line-height: 20px; }
  .legend span { display: flex; align-items: center; gap: 9px; height: 20px; white-space: nowrap; }
  .bars { gap: 0 22px; padding: 5px 12px 0 20px; }
  .lines { gap: 0 67px; padding-left: 67px; }
  .legend i { width: 21px; height: 13px; }

  .form { background: #f0f0f0; }
  .sheet { overflow: hidden; padding: 2px 0 0 2px; background: #808080; flex-shrink: 0; }
  .sheet table {
    width: 532px; min-width: 100%; table-layout: fixed; border-collapse: collapse;
    font: 12px/16px 'Liberation Sans', Arial, sans-serif; background: #fff;
  }
  .sheet th, .sheet td { height: 18px; padding: 0; border: 1px solid #707070; text-align: center; white-space: nowrap; }
  .sheet th { background: #f0f0f0; border-color: #000; }
  .sheet .name { width: 112px; }
  .sheet tbody th { font-weight: normal; text-align: left; padding-left: 2px; }
  .sheet td.past { background: #e0e0e0; }
  .calc td, .hist td { background: #e0e0e0; }
  .mkt td { background: #ecf030; }
  .sheet .hist td.past { background: #c0c0c0; color: #208880; }
  .sheet .mkt td.past { background: #e0e0e0; }
  .sheet .prev td { background: #c0c0c0; }
  .sheet .cursor { outline: 2px solid #000; outline-offset: -1px; }
  .adjust, .comment { display: flex; align-items: center; font-family: Roboto, 'Open Sans', sans-serif; padding-left: 10px; flex-shrink: 0; }
  .adjust { padding-top: 18px; }
  .adjust > input[type='checkbox'] { appearance: none; width: 13px; height: 13px; margin: 0 6px 0 6px; padding: 0; border-color: #222; flex-shrink: 0; }
  .adjust .btn { width: 56px; flex-shrink: 0; }
  .adjust .btn.units-btn { width: 62px; }
  .amount { width: 61px; margin-left: 5px; }
  .adjust .spinner { margin: 0 7px 0 2px; }
  .value { flex: 1; min-width: 61px; }
  .adjust .btn.more { width: 9px; padding: 0 0 0 2px; overflow: hidden; margin-left: 1px; text-align: left; }
  .comment { padding-top: 6px; gap: 6px; }
  .comment input { flex: 1; border-right: none; }

  .report { flex-direction: row; background: #f7f6fd; }
  .paper { flex: 1; overflow: hidden; font: 11px/15px 'Liberation Sans', Arial, sans-serif; }
  .paper h3, .paper h4 { height: 20px; font-weight: bold; }
  .paper h3 { padding-left: 2px; margin-bottom: 20px; }
  .paper h4 { padding-left: 36px; }
  .paper table { margin: 20px 0 0 34px; border-spacing: 0; table-layout: fixed; width: 401px; }
  .paper th, .paper td { height: 20px; padding: 0 0 0 2px; vertical-align: top; text-align: left; }
  .paper .origin { width: 133px; }
  .lag0 { background: #3dd23d; }
  .lag1 { background: #9898f8; }
  .lag2 { background: #c86490; }
  .lag3 { background: #f8f830; }
  .report .vbar .thumb { flex: 90; margin-top: 3px; }
  .report .vbar .after { flex: 125; }

  .status { display: flex; align-items: center; height: 21px; padding: 2px 2px 0 2px; border-top: 1px solid #b0b0b0; }
  .path { flex: 1; }
  .jer { padding: 0 4px 0 3px; }
  .cell { width: 10px; height: 16px; border-left: 1px solid #d8d8d8; }
  .cap { width: 34px; padding-left: 4px; border-right: 1px solid #d8d8d8; }
  .grip { margin: 6px 0 0 6px; }

  .taskbar { display: flex; height: 40px; flex-shrink: 0; background: #02040a; color: #fff; }
  .taskbar button { position: relative; width: 49px; height: 40px; display: flex; align-items: center; justify-content: center; }
  .taskbar .sys { width: 48px; }
  .sys + button:not(.sys) { margin-left: 2px; }
  .open::after { content: ''; position: absolute; left: 4px; right: 4px; bottom: 0; height: 2px; background: #76b9ed; }
  .two::after { border-right: 6px solid #4c7ca4; }
  .current { background: #343638; }
  .current::after { left: 0; right: 0; }
  .badge {
    position: absolute; display: flex; align-items: center; justify-content: center; border-radius: 10px;
    font-size: 11px; line-height: 14px;
  }
  .mail { left: 20px; top: 18px; width: 30px; height: 17px; background: #282828; border: 1px solid #909090; }
  .skype { left: 28px; top: 22px; width: 12px; height: 12px; background: #f8b840; color: #000; font-size: 10px; }
  .note { left: 14px; top: 18px; width: 20px; height: 17px; background: #383838; border: 1px solid #909090; }
  .tray { margin-left: auto; display: flex; align-items: center; gap: 8px; padding-right: 16px; }
  .more-icons { margin: 0 3px 0 14px; }
  .lang { margin-left: 2px; }
  time { width: 60px; margin-left: 6px; text-align: center; line-height: 18px; white-space: nowrap; }
  .tray button { width: 34px; }
</style>
